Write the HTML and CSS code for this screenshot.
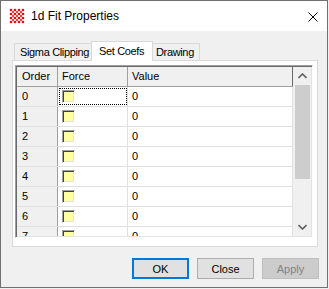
FILE: index.html
```html
<!DOCTYPE html>
<html lang="en">
<head>
    <meta charset="UTF-8">
    <title>1d Fit Properties</title>
    <link rel="stylesheet" href="styles.css">
</head>
<body>
    <div class="window">
        <div class="titlebar">
            <svg class="app-icon" width="16" height="16" viewBox="0 0 16 16">
                <g fill="#f00">
                    <circle cx="2" cy="2" r="1.3"/><circle cx="6" cy="2" r="1.3"/><circle cx="10" cy="2" r="1.3"/><circle cx="14" cy="2" r="1.3"/>
                    <circle cx="4" cy="4" r="1"/><circle cx="8" cy="4" r="1"/><circle cx="12" cy="4" r="1"/>
                    <circle cx="2" cy="6" r="1.3"/><circle cx="6" cy="6" r="1.3"/><circle cx="10" cy="6" r="1.3"/><circle cx="14" cy="6" r="1.3"/>
                    <circle cx="4" cy="8" r="1"/><circle cx="8" cy="8" r="1"/><circle cx="12" cy="8" r="1"/>
                    <circle cx="2" cy="10" r="1.3"/><circle cx="6" cy="10" r="1.3"/><circle cx="10" cy="10" r="1.3"/><circle cx="14" cy="10" r="1.3"/>
                    <circle cx="4" cy="12" r="1"/><circle cx="8" cy="12" r="1"/><circle cx="12" cy="12" r="1"/>
                    <circle cx="2" cy="14" r="1.3"/><circle cx="6" cy="14" r="1.3"/><circle cx="10" cy="14" r="1.3"/><circle cx="14" cy="14" r="1.3"/>
                </g>
            </svg>
            <span class="title">1d Fit Properties</span>
            <svg class="close-x" width="10" height="10" viewBox="0 0 10 10">
                <path d="M0.5 0.5 L9.5 9.5 M9.5 0.5 L0.5 9.5" stroke="#000" stroke-width="1"/>
            </svg>
        </div>

        <div class="body">
            <div class="tabs">
                <div class="tab tab-sigma">Sigma Clipping</div>
                <div class="tab tab-coefs active">Set Coefs</div>
                <div class="tab tab-drawing">Drawing</div>
            </div>

            <div class="panel">
                <div class="grid">
                    <div class="table">
                        <div class="row head">
                            <div class="cell c-order">Order</div>
                            <div class="cell c-force">Force</div>
                            <div class="cell c-value">Value</div>
                        </div>
                        <div class="row">
                            <div class="cell c-order">0</div>
                            <div class="cell c-force focus"><span class="check"></span></div>
                            <div class="cell c-value">0</div>
                        </div>
                        <div class="row">
                            <div class="cell c-order">1</div>
                            <div class="cell c-force"><span class="check"></span></div>
                            <div class="cell c-value">0</div>
                        </div>
                        <div class="row">
                            <div class="cell c-order">2</div>
                            <div class="cell c-force"><span class="check"></span></div>
                            <div class="cell c-value">0</div>
                        </div>
                        <div class="row">
                            <div class="cell c-order">3</div>
                            <div class="cell c-force"><span class="check"></span></div>
                            <div class="cell c-value">0</div>
                        </div>
                        <div class="row">
                            <div class="cell c-order">4</div>
                            <div class="cell c-force"><span class="check"></span></div>
                            <div class="cell c-value">0</div>
                        </div>
                        <div class="row">
                            <div class="cell c-order">5</div>
                            <div class="cell c-force"><span class="check"></span></div>
                            <div class="cell c-value">0</div>
                        </div>
                        <div class="row">
                            <div class="cell c-order">6</div>
                            <div class="cell c-force"><span class="check"></span></div>
                            <div class="cell c-value">0</div>
                        </div>
                        <div class="row">
                            <div class="cell c-order">7</div>
                            <div class="cell c-force"><span class="check"></span></div>
                            <div class="cell c-value">0</div>
                        </div>
                    </div>
                    <div class="scrollbar">
                        <svg class="arrow" width="9" height="6" viewBox="0 0 9 6">
                            <path d="M0.5 5 L4.5 1 L8.5 5" fill="none" stroke="#606060" stroke-width="1.6"/>
                        </svg>
                        <div class="track">
                            <div class="thumb"></div>
                        </div>
                        <svg class="arrow" width="9" height="6" viewBox="0 0 9 6">
                            <path d="M0.5 1 L4.5 5 L8.5 1" fill="none" stroke="#606060" stroke-width="1.6"/>
                        </svg>
                    </div>
                </div>
            </div>

            <div class="buttons">
                <button class="btn default">OK</button>
                <button class="btn">Close</button>
                <button class="btn disabled">Apply</button>
            </div>
        </div>
    </div>
</body>
</html>
```

FILE: styles.css
```css
* {
    margin: 0;
    padding: 0;
    box-sizing: border-box;
}

body {
    background: #f0f0f0;
    font-family: 'Liberation Sans', Arial, sans-serif;
    font-size: 11px;
    color: #000;
}

.window {
    width: 328px;
    height: 288px;
    border: 1px solid #707070;
    background: #f0f0f0;
    display: flex;
    flex-direction: column;
}

/* title bar */
.titlebar {
    height: 30px;
    background: #fff;
    display: flex;
    align-items: center;
    padding-left: 8px;
}

.app-icon {
    margin-right: 6px;
}

.title {
    font-size: 12px;
    flex: 1;
}

.close-x {
    margin-right: 9px;
    margin-top: 1px;
}

/* dialog body */
.body {
    flex: 1;
    padding: 10px 9px 0 11px;
}

.tabs {
    display: flex;
    align-items: flex-end;
    height: 19px;
    padding-left: 2px;
}

.tab {
    height: 17px;
    border: 1px solid #d9d9d9;
    border-bottom: none;
    background: #f0f0f0;
    padding: 1px 0 0 5px;
    line-height: 15px;
    white-space: nowrap;
    letter-spacing: -0.35px;
    overflow: hidden;
}

.tab + .tab {
    margin-left: -1px;
}

.tab-sigma {
    width: 80px;
}

.tab-coefs {
    width: 58px;
}

.tab-drawing {
    width: 50px;
}

.tab.active {
    height: 20px;
    width: 62px;
    margin: 0 -2px -1px -3px;
    padding: 2px 0 0 7px;
    background: #fff;
    position: relative;
    z-index: 1;
}

.panel {
    height: 187px;
    border: 1px solid #d9d9d9;
    background: #fff;
    padding: 4px 4px 0 2px;
}

/* data grid */
.grid {
    height: 173px;
    display: flex;
    border-top: 1px solid #a0a0a0;
    border-left: 1px solid #a0a0a0;
    border-right: 1px solid #fff;
    border-bottom: 1px solid #fff;
    box-shadow: inset 1px 1px 0 #696969, inset -1px -1px 0 #e3e3e3;
    padding: 1px;
    overflow: hidden;
}

.table {
    flex: 1;
    overflow: hidden;
}

.row {
    display: flex;
    height: 20px;
    border-bottom: 1px solid #e0e0e0;
}

.cell {
    height: 19px;
    line-height: 19px;
    border-right: 1px solid #e0e0e0;
    background: #fff;
}

.c-order {
    width: 41px;
    padding-left: 5px;
    background: #f0f0f0;
    border-right-color: #a0a0a0;
}

.c-force {
    width: 70px;
    padding-left: 4px;
}

.c-value {
    flex: 1;
    padding-left: 4px;
}

.row.head {
    border-bottom-color: #a0a0a0;
}

.row.head .cell {
    background: #f0f0f0;
    border-right-color: #a0a0a0;
}

.row.head .c-value {
    border-right-color: #696969;
}

.focus {
    outline: 1px dotted #000;
    outline-offset: -2px;
}

.check {
    display: inline-block;
    width: 13px;
    height: 13px;
    margin-top: 3px;
    vertical-align: top;
    background: #ffffa0;
    border-top: 1px solid #a0a0a0;
    border-left: 1px solid #a0a0a0;
    border-right: 1px solid #fff;
    border-bottom: 1px solid #fff;
    box-shadow: inset 1px 1px 0 #404040, inset -1px -1px 0 #e3e3e3;
}

/* scrollbar */
.scrollbar {
    width: 18px;
    background: #f0f0f0;
    display: flex;
    flex-direction: column;
    align-items: center;
}

.arrow {
    margin: 6px 0;
}

.track {
    flex: 1;
    width: 100%;
    padding: 0 1px 0 2px;
}

.thumb {
    height: 94px;
    background: #cdcdcd;
}

/* buttons */
.buttons {
    display: flex;
    justify-content: flex-end;
    gap: 8px;
    margin-top: 11px;
    margin-right: -1px;
}

.btn {
    width: 57px;
    height: 21px;
    border: 1px solid #adadad;
    background: #e1e1e1;
    font-family: inherit;
    font-size: 11px;
    color: #000;
}

.btn.default {
    border: 2px solid #0078d7;
}

.btn.disabled {
    border-color: #bfbfbf;
    background: #cccccc;
    color: #838383;
}
```
